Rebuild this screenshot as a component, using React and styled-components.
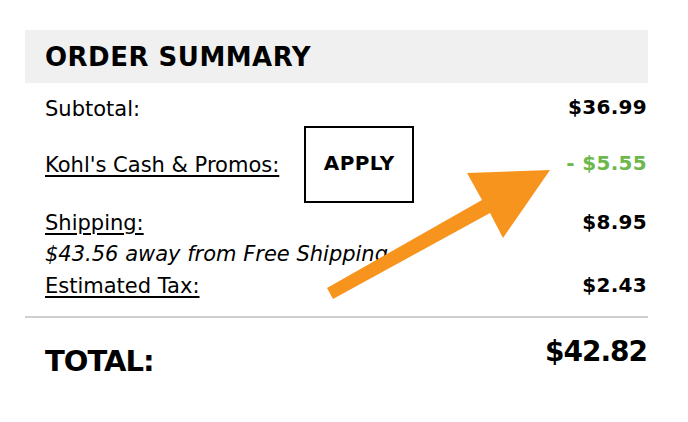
import React from "react";
import styled, { createGlobalStyle } from "styled-components";

const GlobalStyle = createGlobalStyle`
  body {
    margin: 0;
    background: #fff;
    font-family: "DejaVu Sans", "Liberation Sans", sans-serif;
    color: #000;
  }
`;

const App = () => {
  return (
    <>
      <GlobalStyle />
      <Page>
        <Card>
          <Header>ORDER SUMMARY</Header>
          <Row height="43px" top="8px">
            <Label>Subtotal:</Label>
            <Amount>$36.99</Amount>
          </Row>
          <Row height="77px">
            <PromoLeft>
              <Label underline>Kohl's Cash &amp; Promos:</Label>
              <ApplyButton>APPLY</ApplyButton>
            </PromoLeft>
            <Amount green>- $5.55</Amount>
          </Row>
          <Row height="38px" top="2px">
            <Label underline>Shipping:</Label>
            <Amount>$8.95</Amount>
          </Row>
          <Note>$43.56 away from Free Shipping</Note>
          <Row height="36px" top="2px">
            <Label underline>Estimated Tax:</Label>
            <Amount>$2.43</Amount>
          </Row>
          <Divider />
          <TotalRow>
            <TotalLabel>TOTAL:</TotalLabel>
            <TotalAmount>$42.82</TotalAmount>
          </TotalRow>
        </Card>
        <Arrow viewBox="0 0 688 422">
          <polygon
            points="327,288 333,299 490,213 503,238 550,170 467,173 482,200"
            fill="#f7941d"
          />
        </Arrow>
      </Page>
    </>
  );
};

export default App;

const Page = styled.div`
  position: relative;
  width: 688px;
  height: 422px;
  padding: 30px 40px 0 25px;
  box-sizing: border-box;
`;
const Card = styled.div`
  width: 623px;
  display: flex;
  flex-direction: column;
`;
const Header = styled.div`
  background: #f0f0f0;
  height: 53px;
  display: flex;
  align-items: center;
  padding-left: 20px;
  font-size: 26px;
  font-weight: 700;
  letter-spacing: 0.5px;
`;
const Row = styled.div`
  display: flex;
  justify-content: space-between;
  align-items: center;
  box-sizing: border-box;
  height: ${({ height }) => height};
  padding: ${({ top }) => top || "0"} 0 0 20px;
`;
const PromoLeft = styled.div`
  display: flex;
  align-items: center;
`;
const Label = styled.span`
  font-size: 21px;
  text-decoration: ${({ underline }) => (underline ? "underline" : "none")};
  text-underline-offset: 3px;
  text-decoration-thickness: 1.5px;
`;
const Amount = styled.span`
  font-size: 20px;
  font-weight: 700;
  letter-spacing: 0.3px;
  color: ${({ green }) => (green ? "#6cb84d" : "#000")};
  margin: 0 1px 3px 0;
`;
const ApplyButton = styled.button`
  margin-left: 25px;
  width: 110px;
  height: 77px;
  border: 2px solid #000;
  background: #fff;
  font-family: inherit;
  font-size: 20px;
  font-weight: 700;
  letter-spacing: 0.4px;
  color: #000;
  padding: 0 0 4px;
`;
const Note = styled.div`
  padding-left: 20px;
  font-size: 21px;
  font-style: italic;
  height: 26px;
  display: flex;
  align-items: center;
`;
const Divider = styled.div`
  height: 2px;
  background: #cfcfcf;
  margin-top: 13px;
`;
const TotalRow = styled.div`
  display: flex;
  justify-content: space-between;
  align-items: flex-start;
  padding: 17px 1px 0 20px;
`;
const TotalLabel = styled.span`
  font-size: 29px;
  font-weight: 700;
  letter-spacing: -1px;
  margin-top: 9px;
`;
const TotalAmount = styled.span`
  font-size: 28px;
  font-weight: 700;
  letter-spacing: -1px;
`;
const Arrow = styled.svg`
  position: absolute;
  left: 0;
  top: 0;
  width: 688px;
  height: 422px;
  pointer-events: none;
`;
